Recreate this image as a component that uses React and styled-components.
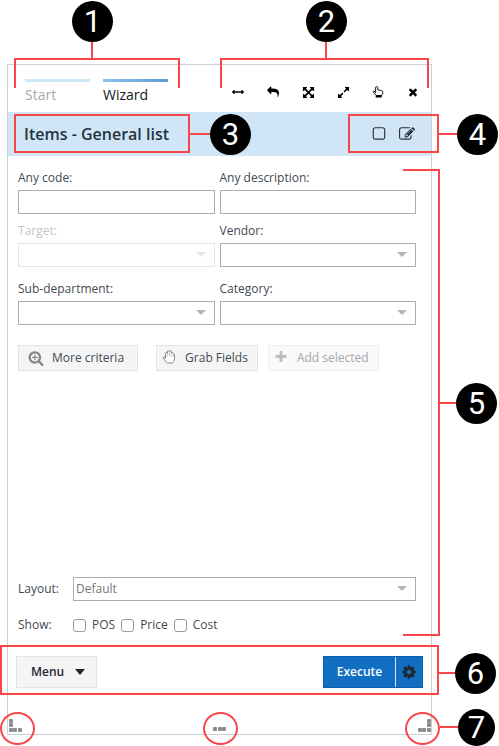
import React, { useState } from "react";
import styled, { createGlobalStyle, css } from "styled-components";

const RED = "#fb4649";

const GlobalStyle = createGlobalStyle`
  *, *::before, *::after { box-sizing: border-box; }
  body {
    margin: 0;
    background: #fff;
    color: #3f4b54;
    font: 12px/18px "Open Sans", "Noto Sans", sans-serif;
  }
  button, input, select { font: inherit; color: inherit; margin: 0; }
`;

const Page = styled.div`
  position: relative;
  display: flex;
  min-height: 100vh;
  padding: 64px 67px 11px 7px;
`;

const Panel = styled.main`
  position: relative;
  flex: 1;
  min-width: 0;
  display: flex;
  flex-direction: column;
  border: 1px solid #cfcfcf;
`;

const TopBar = styled.header`
  display: flex;
  justify-content: space-between;
  align-items: flex-start;
  padding: 14px 11px 0 17px;
  height: 47px;
`;

const Tabs = styled.nav`
  display: flex;
  gap: 13px;
`;

const Tab = styled.button`
  width: 65px;
  padding: 3px 0 0;
  border: 0;
  border-top: 3px solid #cfe6f7;
  background: none;
  text-align: left;
  font-size: 14px;
  line-height: 20px;
  color: #a3a8ad;
  ${(p) => p.$active && css`
    border-image: linear-gradient(90deg, #8fc0ea, #5b9bd8) 1;
    color: #111a20;
    font-weight: 500;
  `}
`;

const Tools = styled.div`
  display: flex;
  gap: 21px;
  padding-top: 6px;
`;

const IconButton = styled.button`
  display: grid;
  place-items: center;
  width: 14px;
  height: 14px;
  padding: 0;
  border: 0;
  background: none;
  color: #000;
`;

const TitleBar = styled.div`
  display: flex;
  align-items: center;
  justify-content: space-between;
  height: 44px;
  padding: 0 16px;
  background: #d0e6f6;
  color: #24343e;
`;

const Title = styled.h1`
  margin: 0;
  font-size: 16px;
  line-height: 22px;
  font-weight: 600;
`;

const TitleActions = styled.div`
  display: flex;
  gap: 12px;
  button { width: 16px; height: 16px; color: #24343e; }
`;

const Body = styled.form`
  flex: 1;
  display: flex;
  flex-direction: column;
  padding: 13px 15px 13px 10px;
`;

const Fields = styled.div`
  display: grid;
  grid-template-columns: 1fr 1fr;
  gap: 8px 5px;
  margin-bottom: ${(p) => p.$after}px;
`;

const Field = styled.label`
  display: flex;
  flex-direction: column;
  gap: 3px;
  opacity: ${(p) => (p.$disabled ? 0.32 : 1)};
`;

const TextInput = styled.input`
  width: 100%;
  height: 24px;
  padding: 0 4px;
  border: 1px solid #adadad;
  border-radius: 0;
  background: #fff;
`;

const SelectWrap = styled.span`
  position: relative;
  flex: 1;
  display: block;
  &::after {
    content: "";
    position: absolute;
    right: 9px;
    top: 9px;
    border: 5px solid transparent;
    border-top-color: #b5b5b5;
    border-bottom: 0;
    pointer-events: none;
  }
`;

const SelectBox = styled.select`
  appearance: none;
  display: block;
  width: 100%;
  height: 24px;
  padding: 0 24px 0 2px;
  border: 1px solid #adadad;
  border-radius: 0;
  background: #fff;
  color: #74787b;
  opacity: 1;
`;

const Actions = styled.div`
  display: flex;
  gap: 10px;
`;

const ActionButton = styled.button`
  display: flex;
  align-items: center;
  gap: 9px;
  height: 26px;
  padding: 0 9px 0 5px;
  border: 1px solid #e3e3e3;
  background: #f5f5f5;
  white-space: nowrap;
  svg { margin-bottom: 3px; }
  ${(p) => p.$wide && css`
    gap: 8px;
    padding: 0 13px 0 9px;
    margin-right: 8px;
    svg { margin-bottom: 0; }
  `}
  &:disabled { color: #a3a8ad; background: #fafafa; border-color: #efefef; }
`;

const Options = styled.div`
  display: grid;
  grid-template-columns: 55px 1fr;
  align-items: center;
  row-gap: 14px;
  margin-top: auto;
`;

const Checks = styled.div`
  display: flex;
  gap: 6px;
  line-height: 20px;
`;

const Check = styled.label`
  display: flex;
  align-items: center;
  gap: 6px;
`;

const CheckBox = styled.input`
  appearance: none;
  width: 13px;
  height: 13px;
  border: 1px solid #9a9a9a;
  border-radius: 3px;
  background: #fff;
  &:checked { background: #116fc2; }
`;

const Footer = styled.footer`
  display: flex;
  justify-content: space-between;
  padding: 8px 8px 46px;
`;

const MenuButton = styled.button`
  display: flex;
  align-items: center;
  gap: 11px;
  height: 32px;
  padding: 0 11px 0 14px;
  border: 1px solid #e3e3e3;
  background: #f5f5f5;
  color: #1d2930;
  font-weight: 600;
`;

const Split = styled.div`
  display: flex;
  height: 32px;
  border: 1px solid #0a5fae;
  background: #116fc2;
`;

const ExecuteButton = styled.button`
  width: 71px;
  padding: 0;
  border: 0;
  background: none;
  color: #fff;
  font-weight: 600;
`;

const SettingsButton = styled.button`
  display: grid;
  place-items: center;
  width: 27px;
  padding: 0;
  border: 0;
  border-left: 1px solid #d5e5f3;
  background: none;
  color: #1d2930;
`;

const Grip = styled.span`
  position: absolute;
  bottom: 2px;
  line-height: 0;
  color: #8c8c8c;
  ${(p) => p.$at === "left" && css`left: 0;`}
  ${(p) => p.$at === "center" && css`left: 50%; transform: translateX(-50%);`}
  ${(p) => p.$at === "right" && css`right: 0;`}
`;

/* Callouts laid over the panel. */
const edge = (name) => (p) => p[`$${name}`] !== undefined && css`${name}: ${p[`$${name}`]}px;`;
const place = css`
  position: absolute;
  pointer-events: none;
  ${edge("top")} ${edge("right")} ${edge("bottom")} ${edge("left")}
  ${(p) => p.$w && css`width: ${p.$w}px;`}
  ${(p) => p.$h && css`height: ${p.$h}px;`}
`;

const Frame = styled.div`
  ${place}
  border: 2px solid ${RED};
  ${(p) => p.$open && css`border-${p.$open}: 0;`}
`;

const Line = styled.div`
  ${place}
  background: ${RED};
`;

const Ring = styled.div`
  ${place}
  width: 35px;
  height: 33px;
  border: 2px solid ${RED};
  border-radius: 50%;
  ${(p) => p.$center && css`left: calc(50% - 47px);`}
`;

const Badge = styled.div`
  ${place}
  display: grid;
  place-items: center;
  width: ${(p) => p.$size || 41}px;
  height: ${(p) => p.$size || 41}px;
  border-radius: 50%;
  background: #000;
  color: #fff;
  font: 31px/36px Roboto, "Liberation Sans", sans-serif;
`;

const PATHS = {
  arrowsH: "M1792 896q0 26-19 45l-256 256q-19 19-45 19t-45-19-19-45v-128h-1024v128q0 26-19 45t-45 19-45-19l-256-256q-19-19-19-45t19-45l256-256q19-19 45-19t45 19 19 45v128h1024v-128q0-26 19-45t45-19 45 19l256 256q19 19 19 45z",
  reply: "M1792 1120q0 166-127 451-3 7-10.5 24t-13.5 30-13 22q-12 17-28 17-15 0-23.5-10t-8.5-25q0-9 2.5-26.5t2.5-23.5q5-68 5-123 0-101-17.5-181t-48.5-138.5-80-101-105.5-69.5-133-42.5-154-21.5-175.5-6h-224v256q0 26-19 45t-45 19-45-19l-512-512q-19-19-19-45t19-45l512-512q19-19 45-19t45 19 19 45v256h224q713 0 875 403 53 134 53 333z",
  arrowsAlt: "M1411 541l-355 355 355 355 144-144q29-31 70-14 39 17 39 59v448q0 26-19 45t-45 19h-448q-42 0-59-40-17-39 14-69l144-144-355-355-355 355 144 144q31 30 14 69-17 40-59 40h-448q-26 0-45-19t-19-45v-448q0-42 40-59 39-17 69 14l144 144 355-355-355-355-144 144q-19 19-45 19-12 0-24-5-40-17-40-59v-448q0-26 19-45t45-19h448q42 0 59 40 17 39-14 69l-144 144 355 355 355-355-144-144q-31-30-14-69 17-40 59-40h448q26 0 45 19t19 45v448q0 42-39 59-13 5-25 5-26 0-45-19z",
  expand: "M883 1056q0 13-10 23l-332 332 144 144q19 19 19 45t-19 45-45 19h-448q-26 0-45-19t-19-45v-448q0-26 19-45t45-19 45 19l144 144 332-332q10-10 23-10t23 10l114 114q10 10 10 23zm781-864v448q0 26-19 45t-45 19-45-19l-144-144-332 332q-10 10-23 10t-23-10l-114-114q-10-10-10-23t10-23l332-332-144-144q-19-19-19-45t19-45 45-19h448q26 0 45 19t19 45z",
  times: "M1490 1322q0 40-28 68l-136 136q-28 28-68 28t-68-28l-294-294-294 294q-28 28-68 28t-68-28l-136-136q-28-28-28-68t28-68l294-294-294-294q-28-28-28-68t28-68l136-136q28-28 68-28t68 28l294 294 294-294q28-28 68-28t68 28l136 136q28 28 28 68t-28 68l-294 294 294 294q28 28 28 68z",
  square: "M1312 256h-832q-66 0-113 47t-47 113v832q0 66 47 113t113 47h832q66 0 113-47t47-113v-832q0-66-47-113t-113-47zm288 160v832q0 119-84.5 203.5t-203.5 84.5h-832q-119 0-203.5-84.5t-84.5-203.5v-832q0-119 84.5-203.5t203.5-84.5h832q119 0 203.5 84.5t84.5 203.5z",
  edit: "M888 1184l116-116-152-152-116 116v56h96v96h56zm440-720q-16-16-33 1l-350 350q-17 17-1 33t33-1l350-350q17-17 1-33zm80 594v190q0 119-84.5 203.5t-203.5 84.5h-832q-119 0-203.5-84.5t-84.5-203.5v-832q0-119 84.5-203.5t203.5-84.5h832q63 0 117 25 15 7 18 23 3 17-9 29l-49 49q-14 14-32 8-23-6-45-6h-832q-66 0-113 47t-47 113v832q0 66 47 113t113 47h832q66 0 113-47t47-113v-126q0-13 9-22l64-64q15-15 35-7t20 29zm-96-738l288 288-672 672h-288v-288zm444 132l-92 92-288-288 92-92q28-28 68-28t68 28l152 152q28 28 28 68t-28 68z",
  searchPlus: "M1088 800v64q0 13-9.5 22.5t-22.5 9.5h-224v224q0 13-9.5 22.5t-22.5 9.5h-64q-13 0-22.5-9.5t-9.5-22.5v-224h-224q-13 0-22.5-9.5t-9.5-22.5v-64q0-13 9.5-22.5t22.5-9.5h224v-224q0-13 9.5-22.5t22.5-9.5h64q13 0 22.5 9.5t9.5 22.5v224h224q13 0 22.5 9.5t9.5 22.5zm128 32q0-185-131.5-316.5t-316.5-131.5-316.5 131.5-131.5 316.5 131.5 316.5 316.5 131.5 316.5-131.5 131.5-316.5zm512 832q0 53-37.5 90.5t-90.5 37.5q-54 0-90-38l-343-342q-179 124-399 124-143 0-273.5-55.5t-225-150-150-225-55.5-273.5 55.5-273.5 150-225 225-150 273.5-55.5 273.5 55.5 225 150 150 225 55.5 273.5q0 220-124 399l343 343q37 37 37 90z",
  plus: "M1600 736v192q0 40-28 68t-68 28h-416v416q0 40-28 68t-68 28h-192q-40 0-68-28t-28-68v-416h-416q-40 0-68-28t-28-68v-192q0-40 28-68t68-28h416v-416q0-40 28-68t68-28h192q40 0 68 28t28 68v416h416q40 0 68 28t28 68z",
  cog: "M1152 896q0-106-75-181t-181-75-181 75-75 181 75 181 181 75 181-75 75-181zm512-109v222q0 12-8 23t-20 13l-185 28q-19 54-39 91 35 50 107 138 10 12 10 25t-9 23q-27 37-99 108t-94 71q-12 0-26-9l-138-108q-44 23-91 38-16 136-29 186-7 28-36 28h-222q-14 0-24.5-8.5t-11.5-21.5l-28-184q-49-16-90-37l-141 107q-10 9-25 9-14 0-25-11-126-114-165-168-7-10-7-23 0-12 8-23 15-21 51-66.5t54-70.5q-27-50-41-99l-183-27q-13-2-21-12.5t-8-23.5v-222q0-12 8-23t19-13l186-28q14-46 39-92-40-57-107-138-10-12-10-24 0-10 9-23 26-36 98.5-107.5t94.5-71.5q13 0 26 10l138 107q44-23 91-38 16-136 29-186 7-28 36-28h222q14 0 24.5 8.5t11.5 21.5l28 184q49 16 90 37l142-107q9-9 24-9 13 0 25 10 129 119 165 170 7 8 7 22 0 12-8 23-15 21-51 66.5t-54 70.5q26 50 41 98l183 28q13 2 21 12.5t8 23.5z",
};

const Glyph = ({ name, size = 14, color = "currentColor" }) => (
  <svg width={size} height={size} viewBox="0 0 1792 1792" fill={color} aria-hidden="true">
    <path d={PATHS[name]} />
  </svg>
);

const PointUp = () => (
  <svg width="12" height="12" viewBox="0 0 12 12" fill="none" stroke="#000" aria-hidden="true">
    <path d="M3.6 6.8V1.7a1.1 1.1 0 0 1 2.2 0v2.4l1-.2 1 .4 1.2.1.9.5.9.7v1.7L9.600 9.500H4.300L1.300 6.300c-.5-.8.4-1.600 1.100-1.100z" strokeWidth="0.900" strokeLinejoin="round" />
    <path d="M3.700 9.300h6v2.200h-6z" fill="#000" stroke="none" />
  </svg>
);

const OpenHand = () => (
  <svg width="14" height="14" viewBox="0 0 14 14" fill="#fff" stroke="#858585" strokeWidth="1" strokeLinejoin="round" strokeLinecap="round" aria-hidden="true">
    <path d="M3.500 8V3.200a1 1 0 0 1 1.900-.2V1.900a1 1 0 0 1 2-.2 1 1 0 0 1 2 .4v.9a1 1 0 0 1 1.900.4l1 .7c.5 1.500.5 4.400-.3 6.400-.5 1.400-1.200 2.500-2 2.500H5.500C4.200 12.600 2.500 9.600 1.200 8c-.5-1 .8-1.700 1.500-.9z" />
    <path d="M5.400 3v3M7.400 2v4M9.400 2.500v3.700M11.300 3.800v2.700" strokeWidth=".5" />
  </svg>
);

const Dots = ({ points }) => (
  <svg width="14" height="13" viewBox="0 0 14 13" fill="currentColor" aria-hidden="true">
    {points.map(([x, y]) => <rect key={`${x}-${y}`} x={x} y={y} width="4" height="4" rx="1" />)}
  </svg>
);

const tools = [
  ["Resize width", <Glyph name="arrowsH" size={12} />],
  ["Undo", <Glyph name="reply" size={12} />],
  ["Move", <Glyph name="arrowsAlt" size={13} />],
  ["Expand", <Glyph name="expand" size={13} />],
  ["Pick", <PointUp />],
  ["Close", <Glyph name="times" size={12} />],
];

const Select = ({ options = [""], ...rest }) => (
  <SelectWrap>
    <SelectBox {...rest}>{options.map((o) => <option key={o}>{o}</option>)}</SelectBox>
  </SelectWrap>
);

export default function App() {
  const [tab, setTab] = useState("Wizard");
  return (
    <>
      <GlobalStyle />
      <Page>
        <Panel>
          <TopBar>
            <Tabs>
              {["Start", "Wizard"].map((t) => (
                <Tab key={t} type="button" $active={t === tab} onClick={() => setTab(t)}>{t}</Tab>
              ))}
            </Tabs>
            <Tools>
              {tools.map(([label, icon]) => (
                <IconButton key={label} type="button" aria-label={label}>{icon}</IconButton>
              ))}
            </Tools>
          </TopBar>
          <TitleBar>
            <Title>Items - General list</Title>
            <TitleActions>
              <IconButton type="button" aria-label="Select"><Glyph name="square" size={16} /></IconButton>
              <IconButton type="button" aria-label="Edit"><Glyph name="edit" size={16} /></IconButton>
            </TitleActions>
          </TitleBar>
          <Body onSubmit={(e) => e.preventDefault()}>
            <Fields $after={13}>
              <Field>Any code:<TextInput type="text" /></Field>
              <Field>Any description:<TextInput type="text" /></Field>
              <Field $disabled>Target:<Select disabled /></Field>
              <Field>Vendor:<Select /></Field>
            </Fields>
            <Fields $after={20}>
              <Field>Sub-department:<Select /></Field>
              <Field>Category:<Select /></Field>
            </Fields>
            <Actions>
              <ActionButton type="button" $wide><Glyph name="searchPlus" size={16} color="#858585" />More criteria</ActionButton>
              <ActionButton type="button"><OpenHand />Grab Fields</ActionButton>
              <ActionButton type="button" disabled><Glyph name="plus" size={14} color="#bdbdbd" />Add selected</ActionButton>
            </Actions>
            <Options>
              <label htmlFor="layout">Layout:</label>
              <Select id="layout" options={["Default"]} />
              <span id="show">Show:</span>
              <Checks role="group" aria-labelledby="show">
                {["POS", "Price", "Cost"].map((c) => (
                  <Check key={c}><CheckBox type="checkbox" />{c}</Check>
                ))}
              </Checks>
            </Options>
          </Body>
          <Footer>
            <MenuButton type="button">
              Menu
              <svg width="10" height="6" viewBox="0 0 10 6" aria-hidden="true"><path d="M0 0h10L5 6z" fill="#1d2930" /></svg>
            </MenuButton>
            <Split>
              <ExecuteButton type="button">Execute</ExecuteButton>
              <SettingsButton type="button" aria-label="Execute settings"><Glyph name="cog" size={16} /></SettingsButton>
            </Split>
          </Footer>
          <Grip $at="left"><Dots points={[[1, 0], [1, 4], [1, 9], [5, 9], [10, 9]]} /></Grip>
          <Grip $at="center"><Dots points={[[0, 8], [5, 8], [9, 8]]} /></Grip>
          <Grip $at="right"><Dots points={[[10, 0], [10, 4], [10, 9], [5, 9], [1, 9]]} /></Grip>
        </Panel>

        <Frame $open="bottom" $left={14} $top={58} $w={166} $h={30} />
        <Line $left={91} $top={42} $w={2} $h={17} />
        <Badge $left={72} $top={1}>1</Badge>

        <Frame $open="bottom" $right={70} $top={58} $w={209} $h={30} />
        <Line $right={172} $top={42} $w={2} $h={17} />
        <Badge $right={152} $top={1}>2</Badge>

        <Frame $left={14} $top={114} $w={176} $h={39} />
        <Line $left={190} $top={133} $w={20} $h={2} />
        <Badge $left={210} $top={114}>3</Badge>

        <Frame $right={60} $top={114} $w={91} $h={39} />
        <Line $right={42} $top={133} $w={18} $h={2} />
        <Badge $right={1} $top={114}>4</Badge>

        <Frame $open="left" $right={59} $top={169} $bottom={110} $w={37} />
        <Line $right={42} $top={402} $w={17} $h={2} />
        <Badge $right={2} $top={383}>5</Badge>

        <Frame $left={0} $right={60} $bottom={51} $h={50} />
        <Line $right={42} $bottom={72} $w={18} $h={2} />
        <Badge $right={3} $bottom={52}>6</Badge>

        <Ring $left={0} $bottom={1} />
        <Ring $center $bottom={1} />
        <Ring $right={59} $bottom={1} />
        <Line $right={41} $bottom={18} $w={18} $h={2} />
        <Badge $right={4} $bottom={0} $size={37}>7</Badge>
      </Page>
    </>
  );
}
